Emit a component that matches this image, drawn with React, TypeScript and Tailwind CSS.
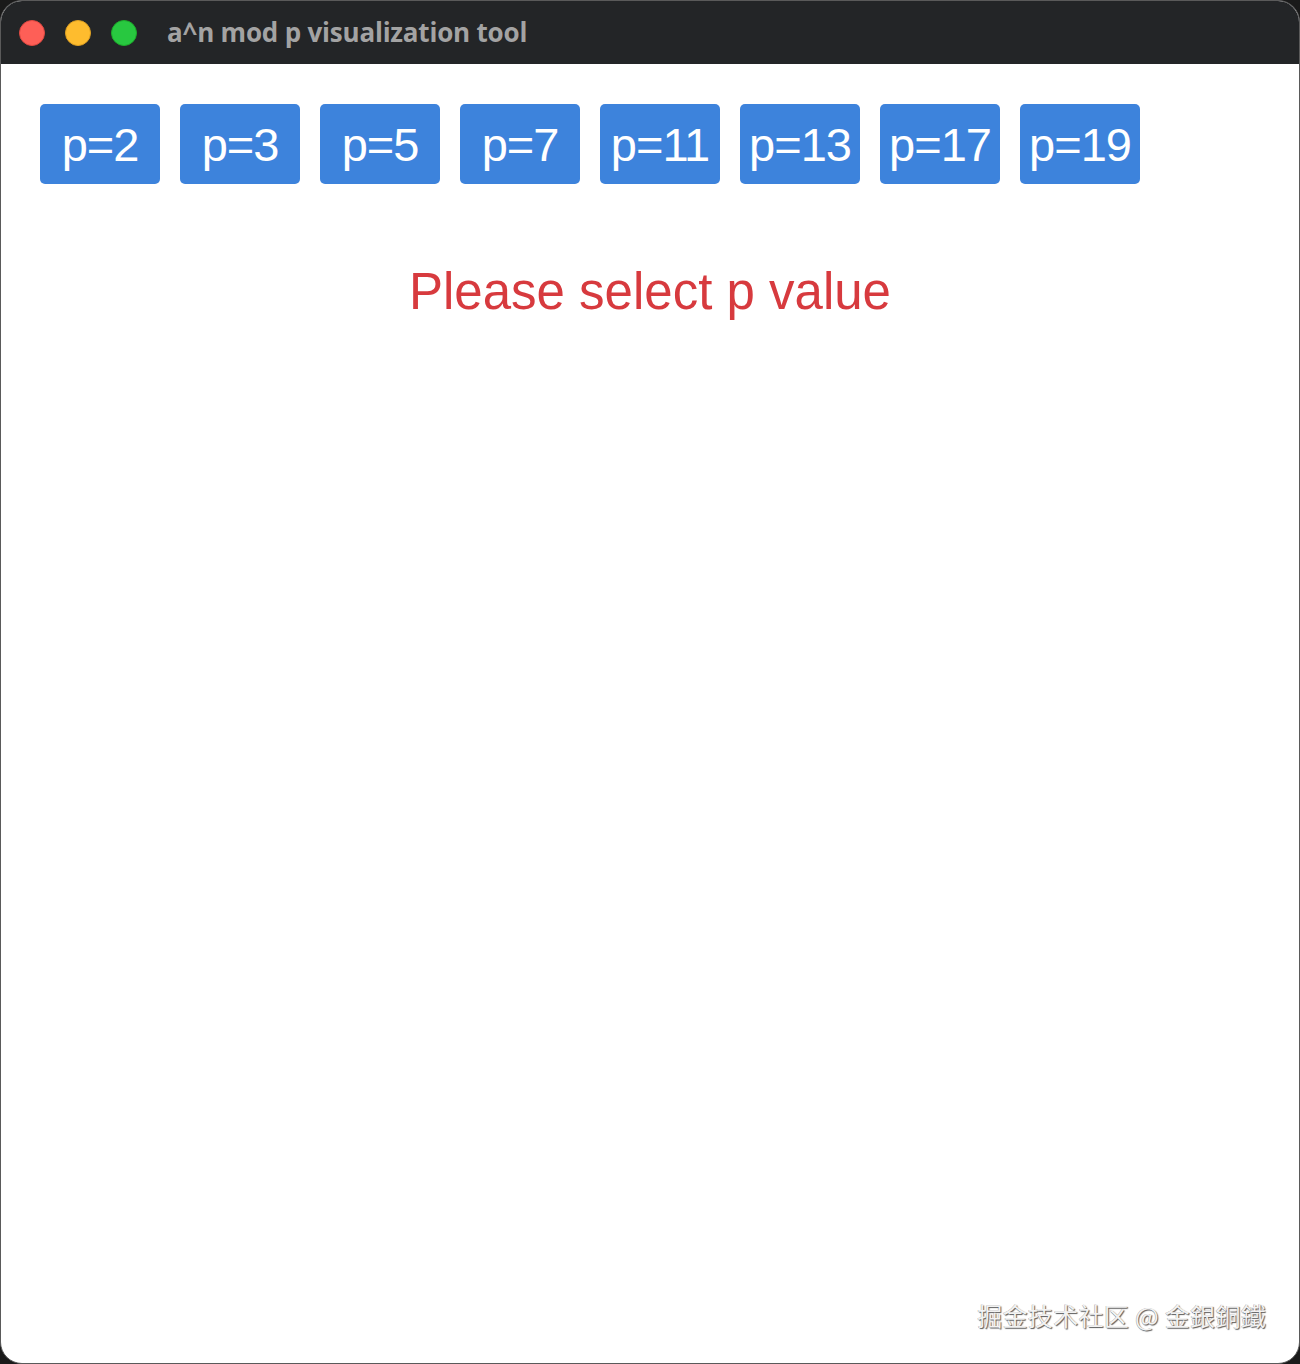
import React from "react";

const ps = [2, 3, 5, 7, 11, 13, 17, 19];

export default function App() {
  return (
    <div className="w-[1300px] h-[1364px] bg-[#1a1a1a]">
      <div className="w-[1300px] h-[1364px] rounded-[22px] overflow-hidden bg-white flex flex-col border border-[#5a5a5a]">
        <div className="h-[63px] shrink-0 bg-[#232527] flex items-center pl-[18px]">
          <div className="flex items-center gap-[20px]">
            <span className="w-[26px] h-[26px] rounded-full bg-[#fe5f57] border border-[#e14942]" />
            <span className="w-[26px] h-[26px] rounded-full bg-[#febc2e] border border-[#dea123]" />
            <span className="w-[26px] h-[26px] rounded-full bg-[#28c840] border border-[#1dad2b]" />
          </div>
          <span
            className="ml-[30px] text-[26px] font-bold text-[#a3a3a3] tracking-[-0.2px]"
            style={{ fontFamily: '"Open Sans", "Liberation Sans", sans-serif' }}
          >
            a^n mod p visualization tool
          </span>
        </div>
        <div
          className="flex-1 relative flex flex-col"
          style={{ fontFamily: '"Liberation Sans", Arial, sans-serif' }}
        >
          <div className="flex gap-[20px] pl-[39px] pt-[40px]">
            {ps.map((p) => (
              <button
                key={p}
                className="w-[120px] h-[80px] rounded-[5px] bg-[#3d83dc] text-white text-[47px] leading-none flex items-center justify-center whitespace-nowrap tracking-[-1px]"
              >
                p={p}
              </button>
            ))}
          </div>
          <div className="mt-[82px] text-center text-[51px] leading-none text-[#d73a3e]">
            Please select p value
          </div>
          <div
            className="absolute right-[33px] bottom-[35px] text-[25px] leading-none text-[#f2f2f2] tracking-[0.3px]"
            style={{
              fontFamily: '"Noto Sans CJK SC", "Noto Sans CJK TC", sans-serif',
              textShadow: "1px 1px 1px rgba(0,0,0,0.65), -0.5px -0.5px 0.5px rgba(0,0,0,0.35)",
            }}
          >
            掘金技术社区 @ 金銀銅鐵
          </div>
        </div>
      </div>
    </div>
  );
}
